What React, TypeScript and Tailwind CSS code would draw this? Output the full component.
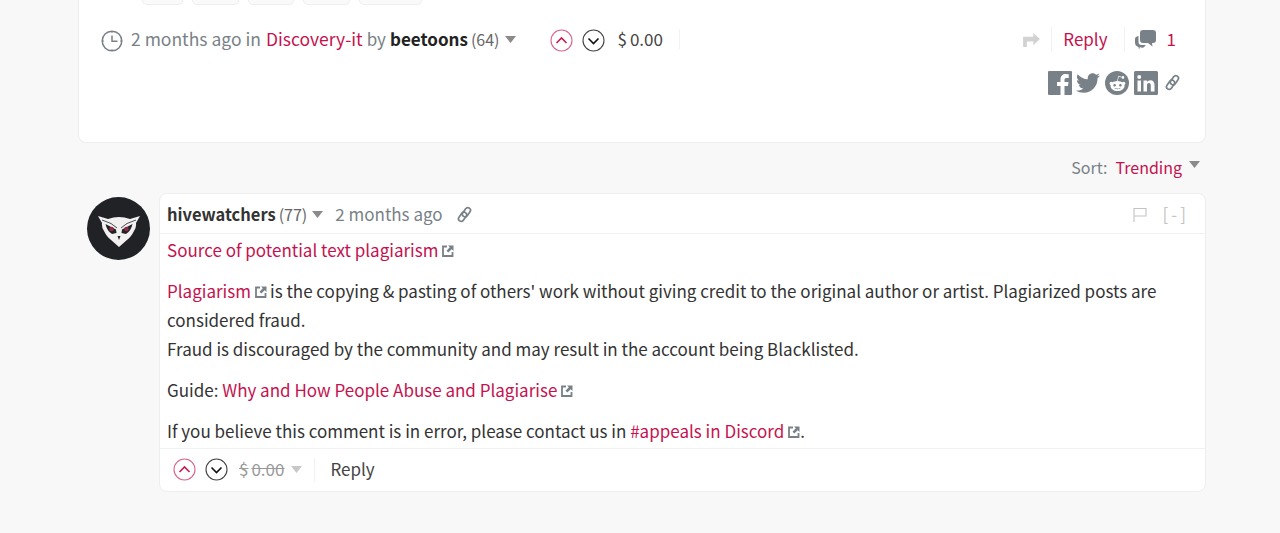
import React from "react";
import { FaTwitter, FaRedditAlien } from "react-icons/fa";

const Vote = ({ dir }: { dir: "up" | "down" }) => (
  <svg width="23" height="23" viewBox="0 0 23 23" fill="none" className="shrink-0">
    <circle cx="11.500" cy="11.500" r="10.500" stroke={dir === "up" ? "#d9648a" : "#444"} strokeWidth="1.100" />
    {dir === "up" ? (
      <path d="M6.500 14 11.500 9l5 5" stroke="#c51d4f" strokeWidth="1.600" />
    ) : (
      <path d="M6.500 9.500 11.500 14.500l5-5" stroke="#111" strokeWidth="1.600" />
    )}
  </svg>
);
const Caret = ({ color = "#8a8a8a" }: { color?: string }) => (
  <svg width="11" height="7" viewBox="0 0 11 7" className="shrink-0"><path d="M0 0h11L5.500 7z" fill={color} /></svg>
);
const Ext = () => (
  <svg width="12" height="12" viewBox="0 0 12 12" fill="none" className="ml-[4px] mr-[3px] inline-block align-[0px]">
    <path d="M5 1.500H1v9.500h9.500V7" stroke="#788187" strokeWidth="1.800" />
    <path d="M6 0.500H11.500V6L9.700 4.200 6.300 7.500 4.500 5.700 7.800 2.300z" fill="#788187" />
  </svg>
);
const LinkIcon = ({ size = 16, color = "#788187" }: { size?: number; color?: string }) => (
  <svg width={size} height={size} viewBox="0 0 16 16" fill="none" stroke={color} strokeWidth="1.600">
    <g transform="rotate(-55 8 8)">
      <rect x="0.500" y="5.200" width="9.500" height="5" rx="2.500" />
      <rect x="6" y="5.800" width="9.500" height="5" rx="2.500" />
    </g>
  </svg>
);
const A = ({ children }: { children: React.ReactNode }) => <span className="text-[#c5124f]">{children}</span>;

export default function App() {
  return (
    <div className="h-[533px] w-[1280px] overflow-hidden bg-[#f8f8f8] font-['Noto_Sans_CJK_SC','Source_Sans_Pro',sans-serif] text-[17px] leading-[28.900px] text-[#333]">
      <div className="ml-[78px] w-[1128px]">
        {/* post card */}
        <div className="h-[143px] rounded-b-[8px] border border-t-0 border-[#eeeeee] bg-white">
          <div className="flex h-[6px] items-start gap-[9px] pl-[63px]">
            {[41, 47, 46, 47, 63].map((w, i) => (
              <div key={i} style={{ width: w }} className="h-[5px] rounded-b-[5px] border border-t-0 border-[#eee] bg-[#fafafa]" />
            ))}
          </div>
          <div className="mt-[18px] flex h-[30px] items-center pl-[22px] pr-[29px]">
            <svg width="22" height="22" viewBox="0 0 22 22" fill="none" stroke="#788187" className="mt-[4px] shrink-0">
              <circle cx="11" cy="11" r="9.800" strokeWidth="1.500" />
              <path d="M11 5.500V11.300H16.500" strokeWidth="1.500" />
              <path d="M11 1.500v1.500M11 19v1.500M1.500 11H3M19 11h1.500" strokeWidth="1" />
            </svg>
            <span className="ml-[8px] text-[17.500px] text-[#788187]">2 months ago in</span>
            <span className="ml-[5px] text-[17.500px]"><A>Discovery-it</A></span>
            <span className="ml-[4px] text-[#788187]">by</span>
            <span className="ml-[4px] font-semibold text-[#222]">beetoons</span>
            <span className="ml-[3px] text-[16px] text-[#666]">(64)</span>
            <span className="ml-[6px]"><Caret /></span>
            <span className="ml-[34px] mt-[2px] flex items-center gap-[9px]"><Vote dir="up" /><Vote dir="down" /></span>
            <span className="ml-[12px] text-[#444]">$<span className="ml-[3px]">0.00</span></span>
            <span className="ml-[16px] h-[20px] border-l border-[#f2f2f2]" />
            <div className="ml-auto flex items-center">
              <svg width="17" height="14" viewBox="0 0 18 15" className="mt-[2px] shrink-0" fill="#d2d2d2">
                <path d="M0 4H11V0L18 6.500 11 13V9H4V15H0z" />
              </svg>
              <span className="ml-[11px] h-[26px] border-l border-[#f2f2f2]" />
              <span className="ml-[11px]"><A>Reply</A></span>
              <span className="ml-[16px] h-[26px] border-l border-[#f2f2f2]" />
              <svg width="21" height="20" viewBox="0 0 21 20" className="ml-[10px] mt-[2px] shrink-0" fill="#788187">
                <path d="M5 3q0-3 3-3h10q3 0 3 3v7q0 3-3 3h-1l.5 3.500L13 13H8q-3 0-3-3z" />
                <path d="M3.500 6V12q0 3 3 3h4.500l-2.500 2.500q-2 .7-3.500-.5l-1 2.500L3.500 17Q0 16 0 12.500V9q0-2.500 3.500-3z" />
              </svg>
              <span className="ml-[11px]"><A>1</A></span>
            </div>
          </div>
          <div className="mt-[17px] flex items-center justify-end pr-[24px] text-[#788187]">
            <svg width="24" height="24" viewBox="0 0 24 24" fill="#788187" fillRule="evenodd">
              <path d="M1 0H23a1 1 0 0 1 1 1V23a1 1 0 0 1-1 1H16.500V15H20L20.500 11H16.500V9c0-1.300.4-2 2-2H20.700V3.300Q19 3.100 17.800 3.100c-3.200 0-5.300 2-5.300 5.400V11H9v4h3.500v9H1a1 1 0 0 1-1-1V1a1 1 0 0 1 1-1z" />
            </svg>
            <span className="ml-[4px]"><FaTwitter size={24} /></span>
            <span className="ml-[5px] flex h-[24px] w-[24px] items-center justify-center rounded-full bg-[#788187]"><FaRedditAlien size={17} color="#fff" /></span>
            <svg width="24" height="24" viewBox="0 0 24 24" fill="#788187" fillRule="evenodd" className="ml-[5px]">
              <path d="M1.500 0H22.500A1.500 1.500 0 0 1 24 1.500V22.500A1.500 1.500 0 0 1 22.500 24H1.500A1.500 1.500 0 0 1 0 22.500V1.500A1.500 1.500 0 0 1 1.500 0zM3.500 9.500V20.500H7V9.500zM5.250 4A2 2 0 1 0 5.250 8 2 2 0 0 0 5.250 4zM9.500 9.500V20.500H13V14.500c0-1.700.7-2.500 2-2.500s1.800.9 1.800 2.500V20.500H20.500V14c0-3.200-1.600-4.800-4-4.800-1.600 0-2.800.7-3.500 1.800V9.500z" />
            </svg>
            <span className="ml-[6px] -mt-[1px]"><LinkIcon size={17} /></span>
          </div>
        </div>

        {/* sort */}
        <div className="mt-[10px] flex h-[29px] items-center justify-end pr-[6px] text-[16px]">
          <span className="text-[#788187]">Sort:</span>
          <span className="ml-[8px]"><A>Trending</A></span>
          <span className="ml-[7px] -mt-[6px]"><Caret /></span>
        </div>

        {/* comment */}
        <div className="mt-[11px] flex">
          <div className="ml-[9px] mt-[4px] flex h-[63px] w-[63px] shrink-0 items-center justify-center rounded-full bg-[#212226]">
            <svg width="42" height="31" viewBox="0 0 42 31" className="mt-[6px]">
              <path d="M0 0 10 3Q21-1 32 3L42 0 38 7Q38.500 12 36 15 33 21 29.500 23.500L21 31 12.500 23.500Q9 21 6 15 3.500 12 4 7z" fill="#f2f0f0" />
              <path d="M7.500 8 18 13.500 18.500 17 14 18Q9 15 7.500 8zM34.500 8 24 13.500 23.500 17 28 18Q33 15 34.500 8z" fill="#212226" />
              <circle cx="13.500" cy="13" r="2.300" fill="#8e2a48" />
              <circle cx="28.500" cy="13" r="2.300" fill="#8e2a48" />
              <path d="M19.500 20h3L21 24z" fill="#212226" />
              <path d="M4 4 13 7.500 19 12M38 4 29 7.500 23 12" stroke="#212226" strokeWidth="0.800" fill="none" />
            </svg>
          </div>
          <div className="ml-[9px] h-[299px] flex-1 rounded-[8px] border border-[#eeeeee] bg-white">
            <div className="flex h-[40px] items-center border-b border-[#f2f2f2] pl-[7px] pr-[19px] pt-[2px]">
              <span className="text-[16.500px] font-semibold text-[#333]">hivewatchers</span>
              <span className="ml-[3px] text-[16px] text-[#666]">(77)</span>
              <span className="ml-[5px]"><Caret /></span>
              <span className="ml-[12px] text-[#788187]">2 months ago</span>
              <span className="ml-[13px]"><LinkIcon size={17} /></span>
              <div className="ml-auto flex items-center">
                <svg width="14" height="15" viewBox="0 0 14 15" fill="none" stroke="#c4c4c4" strokeWidth="1.100">
                  <path d="M1 15V1.500H13V9H1" />
                </svg>
                <span className="ml-[16px] flex gap-[3px] text-[#c4c4c4]"><span>[</span><span>-</span><span>]</span></span>
              </div>
            </div>
            <div className="px-[7px] pt-[2px]">
              <p><A>Source of potential text plagiarism</A><Ext /></p>
              <p className="mt-[12px]">
                <A>Plagiarism</A><Ext />is the copying &amp; pasting of others' work without giving credit to the original author or artist. Plagiarized posts are considered fraud.<br />
                Fraud is discouraged by the community and may result in the account being Blacklisted.
              </p>
              <p className="mt-[12px]">Guide: <A>Why and How People Abuse and Plagiarise</A><Ext /></p>
              <p className="mt-[12px]">If you believe this comment is in error, please contact us in <A>#appeals in Discord</A><Ext /><span className="-ml-[3px]">.</span></p>
            </div>
            <div className="mt-[3px] flex h-[42px] items-center border-t border-[#f2f2f2] pl-[13px]">
              <Vote dir="up" />
              <span className="ml-[9px] flex"><Vote dir="down" /></span>
              <span className="ml-[11px] text-[#9a9a9a] line-through">$<span className="ml-[3px]">0.00</span></span>
              <span className="ml-[7px]"><Caret color="#c8c8c8" /></span>
              <span className="ml-[12px] h-[24px] border-l border-[#f2f2f2]" />
              <span className="ml-[15px] text-[#444]">Reply</span>
            </div>
          </div>
        </div>
      </div>
    </div>
  );
}
